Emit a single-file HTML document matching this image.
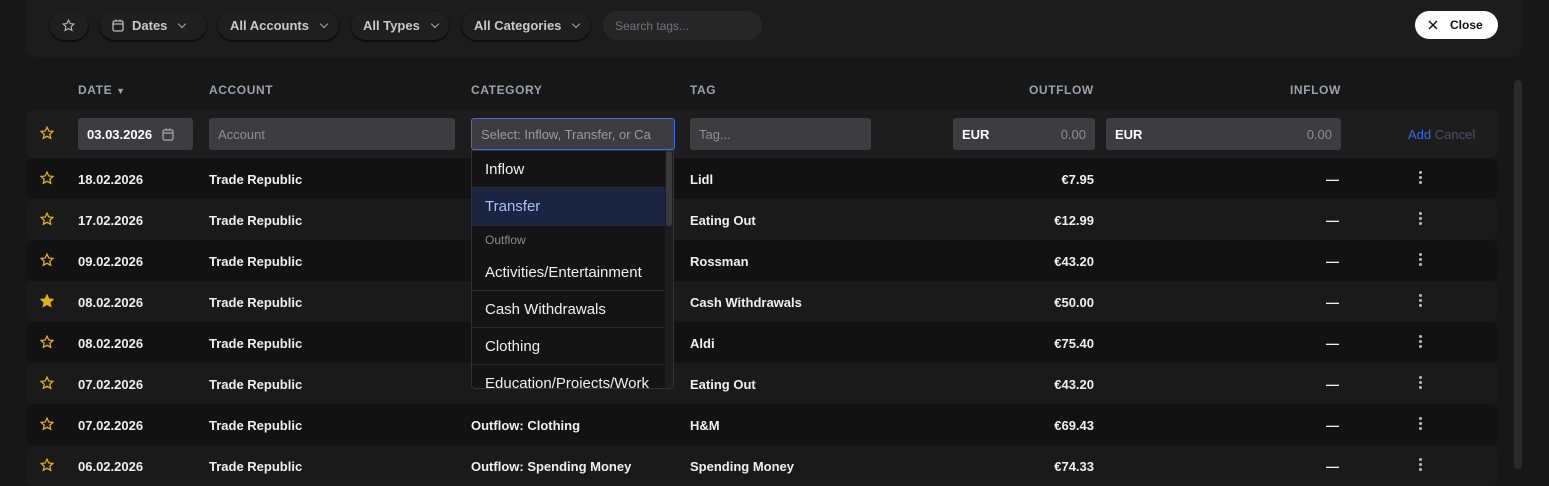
<!DOCTYPE html>
<html><head><meta charset="utf-8"><style>
*{box-sizing:border-box;margin:0;padding:0}
body{width:1549px;height:469px;overflow:hidden;background:#171717;font-family:"Liberation Sans",sans-serif;color:#fff;position:relative;font-size:13px}
.abs{position:absolute}
.panel{left:25px;top:-10px;width:1497px;height:67px;background:#1c1c1c;border-radius:10px}
.pill{position:absolute;top:11px;height:29px;border-radius:15px;background:#1f1f1f;box-shadow:0 1px 2px #000;color:#c9c9c9;font-weight:bold;font-size:13px;display:flex;align-items:center;padding:0 12px;gap:8px;white-space:nowrap}
.chev{width:6px;height:6px;border-right:1.3px solid #aaa;border-bottom:1.3px solid #aaa;transform:rotate(45deg);margin-top:-3px;margin-left:4px;flex:none}
.hdr{top:83px;font-size:12px;font-weight:bold;color:#9aa3ad;letter-spacing:.6px}
.inp{position:absolute;top:118px;height:32px;background:#3d3d41;border-radius:3px;color:#8d8d92;font-size:13px;display:flex;align-items:center;padding:0 9px;white-space:nowrap}
.row{position:absolute;left:26px;width:1472px;height:41px;border-radius:8px}
.row span{position:absolute;top:14px;font-size:13px;font-weight:bold;color:#f0f0f0}
.star{position:absolute;left:14px;top:13px;width:14px;height:14px}
.dots{position:absolute;left:1393px;top:13px;width:3px}
.dots i{display:block;width:3px;height:3px;border-radius:2px;background:#bbb;margin-bottom:2px}
.dd{left:471px;top:150px;width:203px;height:239px;background:#141414;border:1px solid #333;border-radius:0 0 4px 4px;overflow:hidden}
.it{position:absolute;left:0;width:193px;border-bottom:1px solid #2c2c2c;padding-left:13px;font-size:15px;color:#f0f0f0;white-space:nowrap}
</style></head><body>
<div class="abs panel"></div>
<div class="pill" style="left:50px;width:38px;padding:0 12px"><svg width="13" height="13" viewBox="0 0 24 24" fill="none" stroke="#bbb" stroke-width="2"><path d="M12 2l3 6.5 7 .8-5.2 4.8 1.5 7L12 17.6 5.7 21.1l1.5-7L2 9.3l7-.8z"/></svg></div>
<div class="pill" style="left:100px;width:106px"><svg width="12" height="13" viewBox="0 0 12 13" fill="none" stroke="#bbb" stroke-width="1.3"><rect x="1" y="2" width="10" height="10" rx="1.5"/><path d="M1 5h10M4 .5v2M8 .5v2"/></svg>Dates<span class="chev"></span></div>
<div class="pill" style="left:218px;width:121px">All Accounts<span class="chev"></span></div>
<div class="pill" style="left:351px;width:98px">All Types<span class="chev"></span></div>
<div class="pill" style="left:462px;width:128px">All Categories<span class="chev"></span></div>
<div class="pill" style="left:603px;width:159px;background:#262626;box-shadow:none;color:#6f7480;font-weight:normal;font-size:12px">Search tags...</div>
<div class="abs" style="left:1415px;top:11px;width:83px;height:28px;background:#fff;border-radius:14px;color:#111;font-weight:bold;font-size:12px;display:flex;align-items:center;padding-left:13px;gap:12px"><svg width="10" height="10" viewBox="0 0 10 10" stroke="#111" stroke-width="1.4"><path d="M1 1l8 8M9 1l-8 8"/></svg>Close</div>

<div class="abs hdr" style="left:78px">DATE <span style="font-size:9px">▼</span></div>
<div class="abs hdr" style="left:209px">ACCOUNT</div>
<div class="abs hdr" style="left:471px">CATEGORY</div>
<div class="abs hdr" style="left:690px">TAG</div>
<div class="abs hdr" style="left:1029px">OUTFLOW</div>
<div class="abs hdr" style="left:1290px">INFLOW</div>

<div class="row" style="top:110px;height:48px;background:#1d1d1d"></div>
<svg class="abs" style="left:40px;top:126px" width="14" height="14" viewBox="0 0 24 24" fill="none" stroke="#e6b10e" stroke-width="2.2"><path d="M12 2l3 6.5 7 .8-5.2 4.8 1.5 7L12 17.6 5.7 21.1l1.5-7L2 9.3l7-.8z"/></svg>
<div class="inp" style="left:78px;width:115px;color:#fff;font-weight:bold">03.03.2026<svg style="margin-left:10px" width="12" height="13" viewBox="0 0 12 13" fill="none" stroke="#aaa" stroke-width="1.2"><rect x="1" y="2" width="10" height="10" rx="1.5"/><path d="M1 5h10M4 .5v2M8 .5v2"/></svg></div>
<div class="inp" style="left:209px;width:246px">Account</div>
<div class="inp" style="left:471px;width:204px;border:1px solid #3b6fe0;overflow:hidden;color:#9a9aa0">Select: Inflow, Transfer, or Ca</div>
<div class="inp" style="left:690px;width:181px">Tag...</div>
<div class="inp" style="left:953px;width:142px;justify-content:space-between"><b style="color:#fff">EUR</b>0.00</div>
<div class="inp" style="left:1106px;width:235px;justify-content:space-between"><b style="color:#fff">EUR</b>0.00</div>
<div class="abs" style="left:1408px;top:127px;color:#2f6cf0;font-size:13px">Add <span style="color:#4c5360">Cancel</span></div>

<div id="rows"></div>
<script>
var d=[["18.02.2026","","Lidl","€7.95"],["17.02.2026","","Eating Out","€12.99"],["09.02.2026","","Rossman","€43.20"],["08.02.2026","","Cash Withdrawals","€50.00",1],["08.02.2026","","Aldi","€75.40"],["07.02.2026","","Eating Out","€43.20"],["07.02.2026","Outflow: Clothing","H&M","€69.43"],["06.02.2026","Outflow: Spending Money","Spending Money","€74.33"]];
var h="";d.forEach(function(r,i){var t=158+i*41;var f=r[4]?'fill="#e6b10e"':'fill="none"';
h+='<div class="row" style="top:'+t+'px;background:'+(i%2?'#1a1a1a':'#121212')+'"><svg class="star" viewBox="0 0 24 24" '+f+' stroke="#e6b10e" stroke-width="2.2"><path d="M12 2l3 6.5 7 .8-5.2 4.8 1.5 7L12 17.6 5.7 21.1l1.5-7L2 9.3l7-.8z"/></svg><span style="left:52px">'+r[0]+'</span><span style="left:183px">Trade Republic</span><span style="left:445px">'+r[1]+'</span><span style="left:664px">'+r[2]+'</span><span style="right:404px">'+r[3]+'</span><span style="left:1300px">—</span><div class="dots"><i></i><i></i><i></i></div></div>';});
document.getElementById("rows").innerHTML=h;
</script>

<div class="abs dd">
<div class="it" style="top:0;height:37px;line-height:37px">Inflow</div>
<div class="it" style="top:37px;height:38px;line-height:38px;background:#1b2542;color:#a9c2ef">Transfer</div>
<div class="it" style="top:75px;height:28px;line-height:28px;font-size:12px;color:#8a8a8a;border:none">Outflow</div>
<div class="it" style="top:103px;height:37px;line-height:37px">Activities/Entertainment</div>
<div class="it" style="top:140px;height:37px;line-height:37px">Cash Withdrawals</div>
<div class="it" style="top:177px;height:37px;line-height:37px">Clothing</div>
<div class="it" style="top:214px;height:37px;line-height:37px">Education/Projects/Work</div>
<div class="abs" style="left:193px;top:0;width:8px;height:239px;background:#1e1e1e"></div>
<div class="abs" style="left:194px;top:0;width:6px;height:75px;background:#3a3a3a;border-radius:3px"></div>
</div>
<div class="abs" style="left:1514px;top:80px;width:8px;height:389px;background:#2a2a2a;border-radius:4px"></div>
</body></html>
